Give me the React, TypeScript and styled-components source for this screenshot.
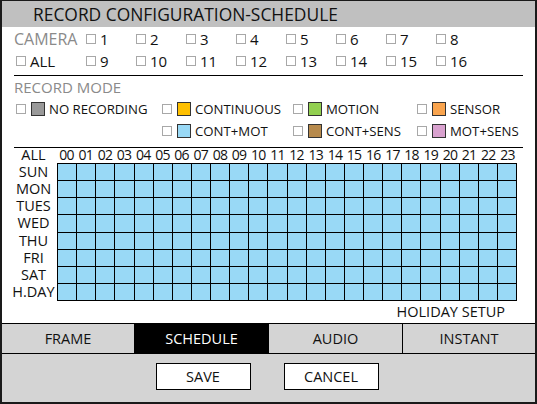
import React from 'react';
import styled, {createGlobalStyle} from 'styled-components';

const GlobalStyle = createGlobalStyle`
  html, body {
    margin: 0;
    padding: 0;
    background: #ffffff;
  }
  body {
    font-family: "Open Sans", "Liberation Sans", sans-serif;
    color: #111;
  }
`;

const Frame = styled.div`
  width: 537px;
  height: 404px;
  box-sizing: border-box;
  border: 2px solid #1a1a1a;
  border-top-width: 1px;
  display: flex;
  flex-direction: column;
  background: #fff;
  overflow: hidden;
`;

const TitleBar = styled.div`
  height: 26px;
  flex: none;
  background: #c0c0c0;
  padding-left: 31px;
  font-size: 17.4px;
  line-height: 26px;
  color: #111;
  white-space: nowrap;
`;

const Section = styled.div`
  padding: 0 12px;
  flex: none;
`;

const CameraGrid = styled.div`
  display: grid;
  grid-template-columns: 72px repeat(8, 50px);
  grid-auto-rows: 22px;
  padding-top: 1px;
  align-items: center;
`;

const Label = styled.span<{$size?: number}>`
  color: #8a8a8a;
  font-size: ${(p) => p.$size ?? 14.5}px;
  white-space: nowrap;
`;

const Check = styled.span`
  display: inline-block;
  width: 10px;
  height: 10px;
  box-sizing: border-box;
  border: 1px solid #a8a8a8;
  background: #fff;
  flex: none;
`;

const CheckItem = styled.label<{$indent?: number}>`
  display: flex;
  align-items: center;
  gap: 4px;
  font-size: 15px;
  white-space: nowrap;
  padding-left: ${(p) => p.$indent ?? 0}px;
`;

const Divider = styled.div<{$top: number}>`
  height: 1px;
  background: #000;
  margin-top: ${(p) => p.$top}px;
`;

const ModeLabel = styled(Label)`
  display: block;
  height: 21px;
  line-height: 21px;
  padding-top: 1px;
`;

const ModeGrid = styled.div`
  display: grid;
  grid-template-columns: 146px 131px 124px 1fr;
  grid-auto-rows: 22px;
  align-items: center;
  padding-left: 2px;
`;

const ModeItem = styled.div<{$col: number}>`
  grid-column: ${(p) => p.$col};
  display: flex;
  align-items: center;
  font-size: 13.2px;
  white-space: nowrap;
`;

const Swatch = styled.span<{$color: string}>`
  width: 14px;
  height: 14px;
  box-sizing: border-box;
  border: 1px solid #333;
  background: ${(p) => p.$color};
  margin: 0 4px 0 5px;
  flex: none;
`;

const ScheduleArea = styled.div`
  padding-left: 8px;
  flex: none;
`;

const ScheduleRow = styled.div`
  display: flex;
`;

const DayColumn = styled.div`
  width: 47px;
  display: grid;
  grid-template-rows: repeat(8, 1fr);
  height: 138px;
  font-size: 14.5px;
  text-align: center;
  line-height: 14px;
  align-items: center;
`;

const HeaderCell = styled.div`
  width: 47px;
  text-align: center;
  font-size: 14.5px;
  height: 15px;
  line-height: 13px;
`;

const Hours = styled.div`
  width: 460px;
  display: grid;
  grid-template-columns: repeat(24, 1fr);
  font-size: 14px;
  height: 15px;
  line-height: 13px;
  letter-spacing: -0.8px;
  text-align: center;
`;

const Grid = styled.div`
  width: 460px;
  height: 138px;
  box-sizing: border-box;
  border: 1px solid #000;
  background: #000;
  display: grid;
  grid-template-columns: repeat(24, 1fr);
  grid-template-rows: repeat(8, 1fr);
  gap: 1px;
`;

const Cell = styled.div`
  background: #99d9f6;
`;

const HolidayRow = styled.div`
  height: 22px;
  line-height: 22px;
  text-align: right;
  padding-right: 30px;
  font-size: 14.5px;
  flex: none;
`;

const TabBar = styled.div`
  display: grid;
  grid-template-columns: 132px 134px 134px 1fr;
  height: 30px;
  box-sizing: border-box;
  border-top: 1px solid #000;
  background: #d4d4d4;
  flex: none;
`;

const Tab = styled.div<{$active?: boolean; $first?: boolean}>`
  display: flex;
  align-items: center;
  justify-content: center;
  font-size: 14.5px;
  border-left: ${(p) => (p.$first ? 'none' : '1px solid #000')};
  background: ${(p) => (p.$active ? '#000' : 'transparent')};
  color: ${(p) => (p.$active ? '#fff' : '#111')};
`;

const Footer = styled.div`
  flex: 1;
  background: #d4d4d4;
  border-top: 1px solid #000;
  display: flex;
  justify-content: center;
  gap: 33px;
  padding-top: 9px;
  padding-right: 3px;
`;

const Button = styled.button`
  width: 95px;
  height: 27px;
  border: 1px solid #000;
  background: #fff;
  font-family: inherit;
  font-size: 14.5px;
  color: #111;
  padding: 0;
`;

const days = ['SUN', 'MON', 'TUES', 'WED', 'THU', 'FRI', 'SAT', 'H.DAY'];

const modes = [
  {label: 'NO RECORDING', color: '#999999', col: 1},
  {label: 'CONTINUOUS', color: '#ffc000', col: 2},
  {label: 'MOTION', color: '#92d050', col: 3},
  {label: 'SENSOR', color: '#f9a44e', col: 4},
  {label: 'CONT+MOT', color: '#99d9f6', col: 2},
  {label: 'CONT+SENS', color: '#b78a4c', col: 3},
  {label: 'MOT+SENS', color: '#d9a2cf', col: 4},
];

export default function App() {
  const hours = Array.from({length: 24}, (_, i) => String(i).padStart(2, '0'));
  return (
    <>
      <GlobalStyle/>
      <Frame>
        <TitleBar>RECORD CONFIGURATION-SCHEDULE</TitleBar>
        <Section>
          <CameraGrid>
            <Label $size={16}>CAMERA</Label>
            {[1, 2, 3, 4, 5, 6, 7, 8].map((n) => (
              <CheckItem key={n}><Check/>{n}</CheckItem>
            ))}
            <CheckItem $indent={2}><Check/>ALL</CheckItem>
            {[9, 10, 11, 12, 13, 14, 15, 16].map((n) => (
              <CheckItem key={n}><Check/>{n}</CheckItem>
            ))}
          </CameraGrid>
          <Divider $top={3}/>
          <ModeLabel $size={15}>RECORD MODE</ModeLabel>
          <ModeGrid>
            {modes.map((m) => (
              <ModeItem key={m.label} $col={m.col}>
                <Check/>
                <Swatch $color={m.color}/>
                {m.label}
              </ModeItem>
            ))}
          </ModeGrid>
          <Divider $top={5}/>
        </Section>
        <ScheduleArea>
          <ScheduleRow>
            <HeaderCell>ALL</HeaderCell>
            <Hours>
              {hours.map((h) => <span key={h}>{h}</span>)}
            </Hours>
          </ScheduleRow>
          <ScheduleRow>
            <DayColumn>
              {days.map((d) => <span key={d}>{d}</span>)}
            </DayColumn>
            <Grid>
              {Array.from({length: 24 * 8}, (_, i) => <Cell key={i}/>)}
            </Grid>
          </ScheduleRow>
        </ScheduleArea>
        <HolidayRow>HOLIDAY SETUP</HolidayRow>
        <TabBar>
          <Tab $first>FRAME</Tab>
          <Tab $active>SCHEDULE</Tab>
          <Tab>AUDIO</Tab>
          <Tab>INSTANT</Tab>
        </TabBar>
        <Footer>
          <Button>SAVE</Button>
          <Button>CANCEL</Button>
        </Footer>
      </Frame>
    </>
  );
}
